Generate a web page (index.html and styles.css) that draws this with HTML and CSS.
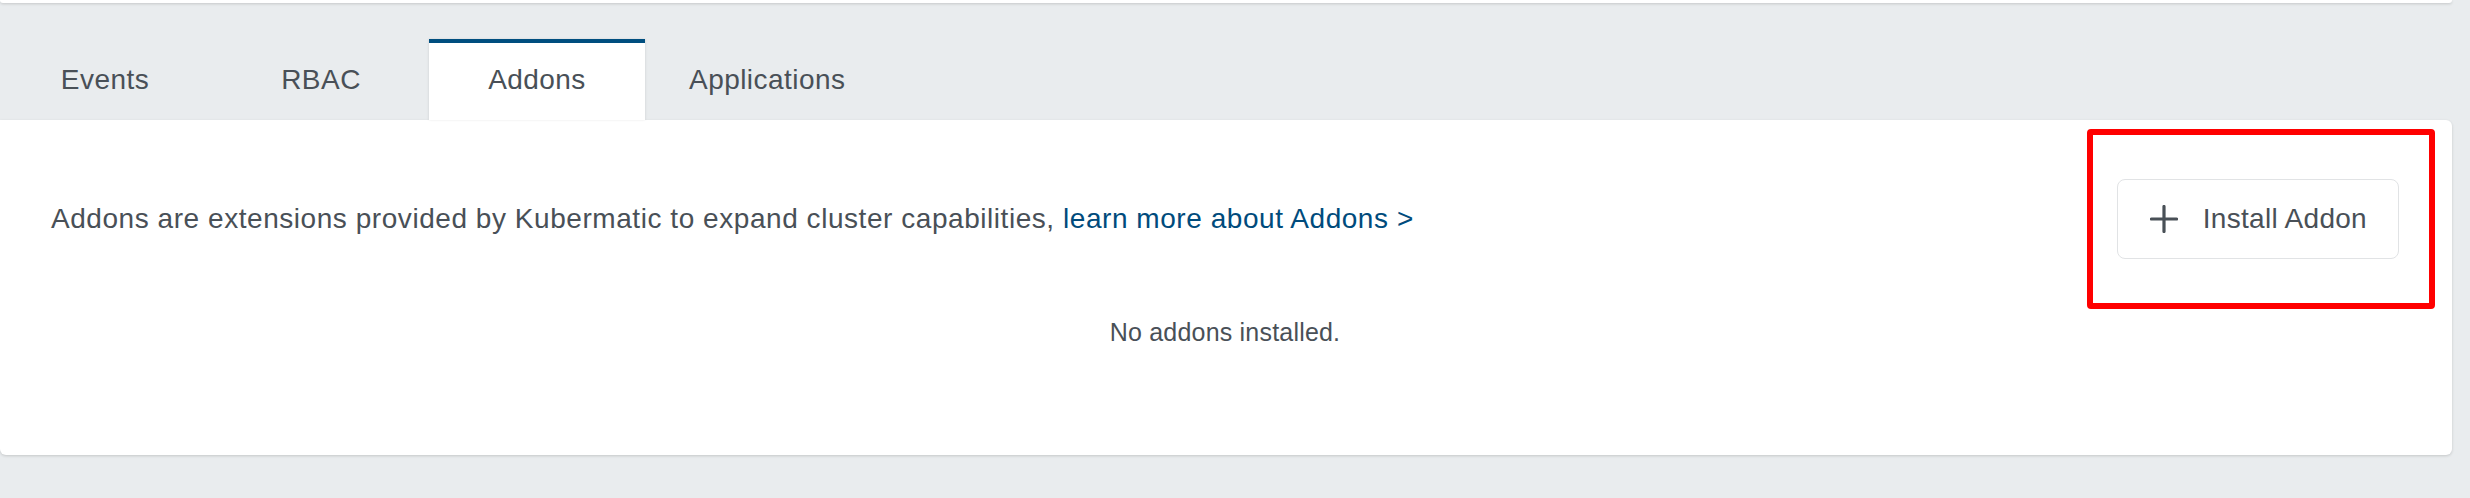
FILE: index.html
```html
<!DOCTYPE html>
<html lang="en">
<head>
<meta charset="utf-8">
<title>Cluster addons</title>
<link rel="stylesheet" href="styles.css">
</head>
<body>
<div class="page">
  <div class="top-card"></div>
  <section class="tabs-section">
    <nav class="tab-list">
      <div class="tab">Events</div>
      <div class="tab">RBAC</div>
      <div class="tab active">Addons</div>
      <div class="tab">Applications</div>
    </nav>
    <div class="card">
      <div class="row">
        <p class="desc">Addons are extensions provided by Kubermatic to expand cluster capabilities, <a class="link" href="#">learn more about Addons &gt;</a></p>
        <button class="btn" type="button">
          <svg class="plus" viewBox="0 0 28 28" width="28" height="28" aria-hidden="true">
            <path d="M14 1.5V26.5M1.5 14H26.5" stroke="currentColor" stroke-width="3.2" stroke-linecap="round" fill="none"/>
          </svg>
          <span>Install Addon</span>
        </button>
      </div>
      <p class="empty">No addons installed.</p>
      <div class="highlight"></div>
    </div>
  </section>
</div>
</body>
</html>
```

FILE: styles.css
```css
html, body {
  margin: 0;
  padding: 0;
  background: #e9ecee;
}

body {
  font-family: "Liberation Sans", Arial, Helvetica, sans-serif;
  color: #495057;
  overflow: hidden;
}

.page {
  padding-right: 18px;
  height: 498px;
  box-sizing: border-box;
}

.top-card {
  height: 3px;
  background: #ffffff;
  border-radius: 0 0 6px 6px;
  box-shadow: 0 1px 3px rgba(0, 0, 0, 0.16);
}

.tab-list {
  display: flex;
  margin-top: 36px;
  margin-left: -3px;
}

.tab {
  min-width: 216px;
  height: 81px;
  padding: 0 44px 4px;
  box-sizing: border-box;
  border-top: 4px solid transparent;
  display: flex;
  align-items: center;
  justify-content: center;
  font-size: 28px;
  letter-spacing: 0.45px;
  color: #495057;
  white-space: nowrap;
}

.tab.active {
  background: #ffffff;
  border-top-color: #004e7f;
  box-shadow: 1px 0 2px rgba(0, 0, 0, 0.06), -1px 0 2px rgba(0, 0, 0, 0.06);
  position: relative;
  z-index: 1;
}

.card {
  position: relative;
  background: #ffffff;
  border-radius: 0 6px 6px 6px;
  box-shadow: 0 1px 3px rgba(0, 0, 0, 0.16);
  padding: 59px 53px 105px 51px;
}

.row {
  display: flex;
  align-items: center;
  justify-content: space-between;
  height: 80px;
}

.desc {
  margin: 0;
  font-size: 28px;
  letter-spacing: 0.55px;
  line-height: 32px;
  color: #495057;
}

.link {
  color: #004b7c;
  text-decoration: none;
}

.btn {
  display: flex;
  align-items: center;
  gap: 25px;
  height: 80px;
  padding: 0 31px 0 32px;
  background: #ffffff;
  border: 1px solid #e1e3e5;
  border-radius: 8px;
  font-family: "Liberation Sans", Arial, Helvetica, sans-serif;
  font-size: 28px;
  letter-spacing: 0.3px;
  color: #495057;
  box-sizing: border-box;
}

.plus {
  display: block;
  width: 28px;
  height: 28px;
}

.empty {
  margin: 55px 0 0;
  text-align: center;
  font-size: 25px;
  letter-spacing: 0.2px;
  line-height: 36px;
  color: #495057;
}

.highlight {
  position: absolute;
  top: 9px;
  right: 17px;
  width: 348px;
  height: 180px;
  box-sizing: border-box;
  border: 6px solid #ff0000;
  border-radius: 4px;
  pointer-events: none;
}
```
